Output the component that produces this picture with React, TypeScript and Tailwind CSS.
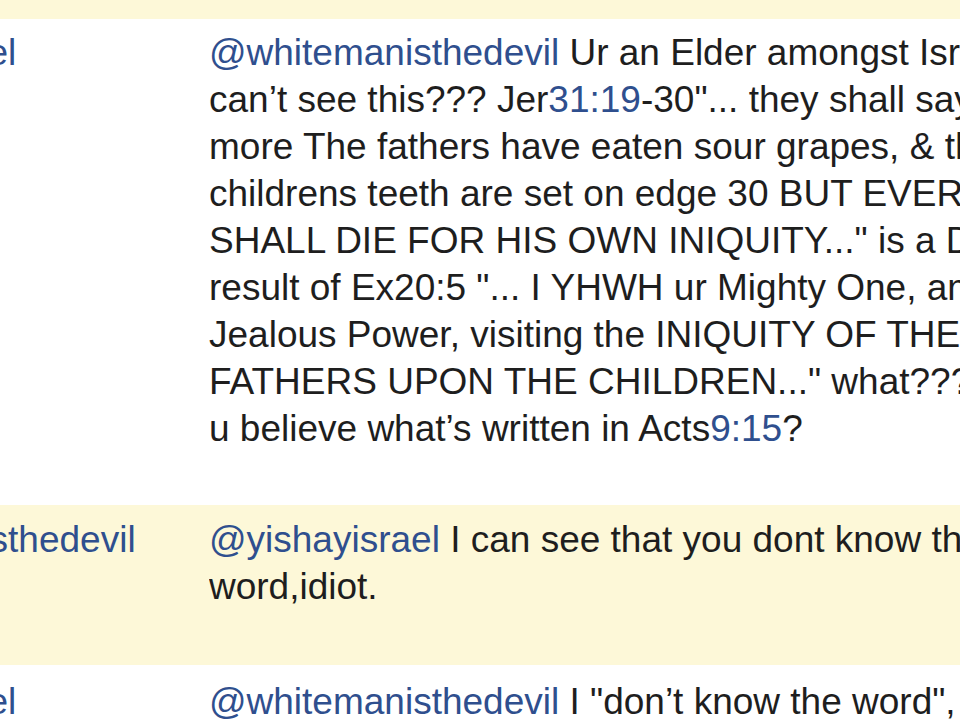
import React from "react";

type Seg = { t: string; link?: boolean };
type Comment = {
  author: string;
  lines: Seg[][];
  tint: boolean;
  pad: string;
};

const comments: Comment[] = [
  {
    author: "yishayisrael",
    tint: false,
    pad: "pt-[10px] pb-[53px]",
    lines: [
      [{ t: "@whitemanisthedevil", link: true }, { t: " Ur an Elder amongst Israel & u" }],
      [{ t: "can\u2019t see this??? Jer" }, { t: "31:19", link: true }, { t: "-30\"... they shall say no" }],
      [{ t: "more The fathers have eaten sour grapes, & the" }],
      [{ t: "childrens teeth are set on edge 30 BUT EVERY ONE" }],
      [{ t: "SHALL DIE FOR HIS OWN INIQUITY...\" is a DIRECT" }],
      [{ t: "result of Ex20:5 \"... I YHWH ur Mighty One, am a" }],
      [{ t: "Jealous Power, visiting the INIQUITY OF THE" }],
      [{ t: "FATHERS UPON THE CHILDREN...\" what??? Do" }],
      [{ t: "u believe what\u2019s written in Acts" }, { t: "9:15", link: true }, { t: "?" }],
    ],
  },
  {
    author: "whitemanisthedevil",
    tint: true,
    pad: "pt-[11px] pb-[55px]",
    lines: [
      [{ t: "@yishayisrael", link: true }, { t: " I can see that you dont know the" }],
      [{ t: "word,idiot." }],
    ],
  },
  {
    author: "yishayisrael",
    tint: false,
    pad: "pt-[13px] pb-[40px]",
    lines: [
      [{ t: "@whitemanisthedevil", link: true }, { t: " I \"don\u2019t know the word\", yet" }],
      [{ t: "u can\u2019t answer a simple question" }],
    ],
  },
];

function CommentRow({ c }: { c: Comment }) {
  return (
    <div className={`flex ${c.tint ? "bg-[#fdf8d8]" : "bg-white"} ${c.pad}`}>
      <div className="ml-[-177px] w-[386px] shrink-0 whitespace-nowrap">
        <span className="text-[#2f4f8e]">{c.author}</span>
      </div>
      <div className="min-w-0 flex-1 overflow-hidden">
        {c.lines.map((line, i) => (
          <div key={i} className="whitespace-nowrap">
            {line.map((s, j) => (
              <span key={j} className={s.link ? "text-[#2f4f8e]" : "text-[#1e1e1e]"}>
                {s.t}
              </span>
            ))}
          </div>
        ))}
      </div>
    </div>
  );
}

export default function App() {
  return (
    <div
      className="h-[720px] w-[960px] overflow-hidden bg-white text-[37px] leading-[47px]"
      style={{ fontFamily: '"Liberation Sans", Arial, sans-serif' }}
    >
      <div className="h-[19px] bg-[#fdf8d8]" />
      {comments.map((c, i) => (
        <CommentRow key={i} c={c} />
      ))}
    </div>
  );
}
